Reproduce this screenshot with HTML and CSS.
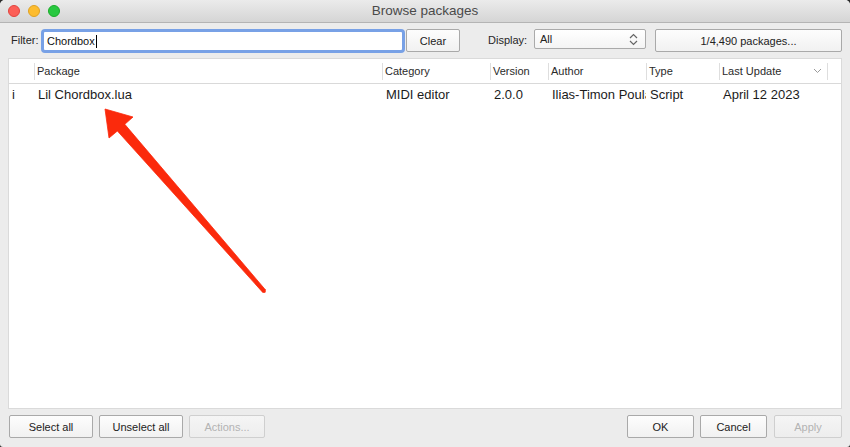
FILE: index.html
```html
<!DOCTYPE html>
<html>
<head>
<meta charset="utf-8">
<title>Browse packages</title>
<link rel="stylesheet" href="styles.css">
</head>
<body>
<div class="window">
  <div class="titlebar">
    <div class="lights">
      <span class="light red"></span>
      <span class="light yellow"></span>
      <span class="light green"></span>
    </div>
    <div class="title">Browse packages</div>
  </div>
  <div class="toolbar">
    <span class="label filter-label">Filter:</span>
    <div class="filter-input"><span class="filter-text">Chordbox</span><span class="caret"></span></div>
    <div class="btn clear-btn">Clear</div>
    <span class="label display-label">Display:</span>
    <div class="select">
      <span>All</span>
      <svg class="updown" width="9" height="13" viewBox="0 0 9 13"><polyline points="1,5 4.5,1.5 8,5" fill="none" stroke="#666" stroke-width="1.2"/><polyline points="1,8 4.5,11.5 8,8" fill="none" stroke="#666" stroke-width="1.2"/></svg>
    </div>
    <div class="btn pack-btn">1/4,490 packages...</div>
  </div>
  <div class="table">
    <div class="grid">
      <div class="th first"></div>
      <div class="th">Package</div>
      <div class="th">Category</div>
      <div class="th">Version</div>
      <div class="th">Author</div>
      <div class="th">Type</div>
      <div class="th sort">Last Update<svg class="chev" width="9" height="6" viewBox="0 0 9 6"><polyline points="1,1 4.5,4.5 8,1" fill="none" stroke="#9a9a9a" stroke-width="1"/></svg></div>
      <div class="th"></div>

      <div class="td first">i</div>
      <div class="td">Lil Chordbox.lua</div>
      <div class="td">MIDI editor</div>
      <div class="td">2.0.0</div>
      <div class="td">Ilias-Timon Poulakis</div>
      <div class="td">Script</div>
      <div class="td">April 12 2023</div>
      <div class="td"></div>
    </div>
  </div>
  <div class="footer">
    <div class="btn w84">Select all</div>
    <div class="btn w84">Unselect all</div>
    <div class="btn w76 disabled">Actions...</div>
    <div class="spacer"></div>
    <div class="btn w67">OK</div>
    <div class="btn w67">Cancel</div>
    <div class="btn w68 disabled apply">Apply</div>
  </div>
  <svg class="arrow" width="850" height="447" viewBox="0 0 850 447">
    <polygon points="105,109 133,117 124.8,124.3 265.4,289.8 262.6,292.2 117.4,131 109,138" fill="#fb2a0c" stroke="#fb2a0c" stroke-width="0.8" stroke-linejoin="round"/>
    <circle cx="264" cy="291" r="1.9" fill="#fb2a0c"/>
  </svg>
</div>
</body>
</html>
```
FILE: styles.css
```css
html, body {
  margin: 0;
  padding: 0;
  background: #2b2b2b;
}
body {
  width: 850px;
  height: 447px;
  overflow: hidden;
  font-family: "Liberation Sans", Arial, sans-serif;
}
.window {
  position: relative;
  width: 850px;
  height: 447px;
  background: #ececec;
  border-radius: 5px 5px 3px 3px;
  overflow: hidden;
  display: flex;
  flex-direction: column;
}
.titlebar {
  height: 22px;
  border-bottom: 1px solid #b4b4b4;
  background: linear-gradient(#ebebeb, #d5d5d5);
  display: flex;
  align-items: center;
  justify-content: center;
  position: relative;
}
.lights {
  position: absolute;
  left: 8px;
  top: 5px;
  display: flex;
  gap: 8px;
}
.light {
  width: 12px;
  height: 12px;
  border-radius: 50%;
  box-sizing: border-box;
}
.red { background: #fc5f57; border: 1px solid #e0443e; }
.yellow { background: #fdbc2e; border: 1px solid #dea123; }
.green { background: #28c840; border: 1px solid #1aab29; }
.title {
  font-size: 13.5px;
  color: #4a4a4a;
  line-height: 22px;
}
.toolbar {
  display: flex;
  align-items: flex-start;
  padding: 6px 8px 0 11px;
  height: 24px;
}
.label {
  font-size: 11px;
  color: #262626;
  line-height: 23px;
}
.filter-label { width: 30px; }
.display-label { width: 46px; margin-left: 28px; }
.filter-input {
  width: 364px;
  height: 24px;
  box-sizing: border-box;
  border: 3px solid #78a1e6;
  border-radius: 4px;
  background: #fff;
  display: flex;
  align-items: center;
  padding-left: 3px;
}
.filter-text {
  font-size: 11px;
  color: #111;
}
.caret {
  width: 1px;
  height: 13px;
  background: #000;
  margin-left: 1px;
}
.btn {
  box-sizing: border-box;
  height: 23px;
  border: 1px solid #a9a9a9;
  border-radius: 2px;
  background: linear-gradient(#fdfdfd, #f1f1f1);
  font-size: 11px;
  color: #222;
  display: flex;
  align-items: center;
  justify-content: center;
}
.clear-btn { width: 54px; margin-left: 1px; }
.select {
  box-sizing: border-box;
  width: 112px;
  height: 20px;
  border: 1px solid #aaaaaa;
  border-radius: 2px;
  background: linear-gradient(#ffffff, #f4f4f4);
  display: flex;
  align-items: center;
  justify-content: space-between;
  padding: 0 7px 0 5px;
  font-size: 11px;
  color: #222;
}
.updown { display: block; }
.pack-btn { width: 187px; margin-left: 9px; }
.table {
  flex: 1;
  margin: 5px 8px 0 8px;
  background: #fff;
  border: 1px solid #dadada;
}
.grid {
  display: grid;
  grid-template-columns: 25px 348px 108px 58px 98px 73px 108px 1fr;
  grid-auto-rows: 20px;
  grid-template-rows: 25px;
}
.th {
  box-sizing: border-box;
  border-bottom: 1px solid #d9d9d9;
  font-size: 11px;
  color: #2a2a2a;
  padding-left: 3px;
  display: flex;
  align-items: center;
  background: linear-gradient(#dedede, #dedede) left 4px / 1px 17px no-repeat;
}
.th.first { background: none; }
.th.sort { justify-content: space-between; padding-right: 5px; }
.chev { display: block; }
.td {
  font-size: 13px;
  color: #1b1b1b;
  padding-left: 4px;
  display: flex;
  align-items: center;
  white-space: nowrap;
  overflow: hidden;
}
.td.first { padding-left: 3px; }
.footer {
  display: flex;
  gap: 6px;
  padding: 6px 8px 9px 9px;
}
.spacer { flex: 1; }
.w84 { width: 84px; }
.w76 { width: 76px; }
.w67 { width: 67px; }
.w68 { width: 68px; }
.apply { margin-left: 1px; }
.btn.disabled {
  color: #b3b3b3;
  border-color: #cfcfcf;
  background: linear-gradient(#f5f5f5, #ededed);
}
.arrow {
  position: absolute;
  left: 0;
  top: 0;
  pointer-events: none;
}
```
